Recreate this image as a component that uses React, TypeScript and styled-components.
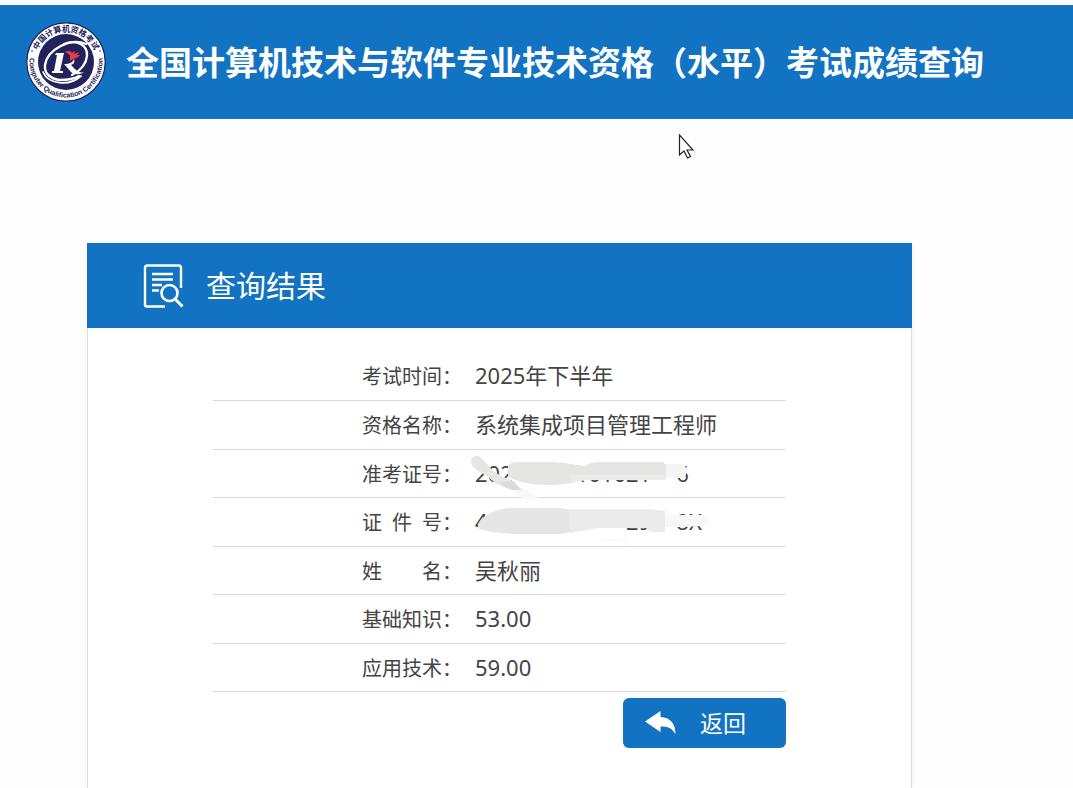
import React from "react";
import styled, { createGlobalStyle } from "styled-components";

const BLUE = "#1173c2";
const NAVY = "#23235b";

const GlobalStyle = createGlobalStyle`
  * { box-sizing: border-box; }
  body {
    margin: 0;
    background: #fefefe;
    color: #444;
    font-family: "Noto Sans", "Noto Sans CJK SC", sans-serif;
  }
`;

const Page = styled.div`
  display: flex;
  flex-direction: column;
  min-height: 100vh;
  padding-top: 5px;
`;

const Header = styled.header`
  display: flex;
  align-items: center;
  gap: 20px;
  height: 114px;
  padding-left: 26px;
  background: ${BLUE};
`;

const SiteTitle = styled.h1`
  margin: 0;
  padding-bottom: 2px;
  color: #fff;
  font-family: "Noto Sans CJK SC", sans-serif;
  font-size: 33px;
  font-weight: 700;
  line-height: 48px;
  white-space: nowrap;
`;

const Main = styled.main`
  display: flex;
  flex: 1;
  flex-direction: column;
  padding: 124px 161px 0 87px;
`;

const Panel = styled.section`
  display: flex;
  flex: 1;
  flex-direction: column;
  box-shadow: 0 0 6px rgba(0, 0, 0, 0.06);
`;

const PanelHeader = styled.div`
  display: flex;
  align-items: center;
  gap: 22px;
  height: 85px;
  padding-left: 56px;
  background: ${BLUE};
`;

const PanelTitle = styled.h2`
  margin: 0;
  color: #fff;
  font-size: 30px;
  font-weight: 400;
  line-height: 44px;
`;

const PanelBody = styled.div`
  display: flex;
  flex: 1;
  flex-direction: column;
  padding: 24px 125px 40px;
  border: solid #ddd;
  border-width: 0 1px;
  background: #fff;
`;

const ResultTable = styled.table`
  width: 100%;
  border-spacing: 0;
  table-layout: fixed;
`;

const Row = styled.tr`
  height: 49px;
  &:nth-child(odd):not(:first-child) { height: 48px; }
`;

const LabelCell = styled.th`
  width: 262px;
  padding: 0 13px 0 0;
  border-bottom: 1px solid #d9d9d9;
  color: #444;
  font-family: "Noto Sans CJK SC", sans-serif;
  font-size: 20px;
  font-weight: 400;
  line-height: 28px;
`;

const Label = styled.span`
  display: flex;
  justify-content: flex-end;
`;

const LabelText = styled.span`
  width: 80px;
  text-align-last: justify;
`;

const ValueCell = styled.td`
  padding: 0 0 2px;
  border-bottom: 1px solid #d9d9d9;
  font-size: 22px;
  line-height: 32px;
  white-space: pre;
`;

const Masked = styled.span`
  position: relative;
  display: block;
`;

const Mask = styled.svg`
  position: absolute;
  top: -7px;
  left: -15px;
  overflow: visible;
`;

const BackButton = styled.button`
  display: flex;
  align-items: center;
  align-self: flex-end;
  gap: 24px;
  width: 163px;
  height: 50px;
  margin-top: 6px;
  padding: 0 0 2px 22px;
  border: 0;
  border-radius: 6px;
  background: ${BLUE};
  color: #fff;
  font-family: "Noto Sans CJK SC", sans-serif;
  font-size: 23px;
  line-height: 32px;
`;

const Pointer = styled.svg`
  position: absolute;
  top: 134px;
  left: 678px;
`;

const Logo = () => (
  <svg width="80" height="80" viewBox="0 0 80 80" aria-hidden="true">
    <defs>
      <path id="ringTop" d="M9.500 40a30.500 30.500 0 0 1 61 0" />
      <path id="ringBottom" d="M4.500 30a36.600 36.600 0 1 0 71 0" />
    </defs>
    <circle cx="40" cy="40" r="39.2" fill="#fff" stroke={NAVY} strokeWidth="1.2" />
    <circle cx="40" cy="40" r="28" fill={NAVY} />
    <g fill={NAVY} fontWeight="700" textAnchor="middle">
      <text fontSize="8" fontFamily="Noto Sans CJK SC, sans-serif">
        <textPath href="#ringTop" startOffset="50%">中国计算机资格考试</textPath>
      </text>
      <text fontSize="7" fontFamily="Liberation Sans, sans-serif">
        <textPath href="#ringBottom" startOffset="50%">Computer Qualification Certification</textPath>
      </text>
    </g>
    <circle cx="6" cy="29" r=".8" fill={NAVY} />
    <circle cx="74" cy="29" r=".8" fill={NAVY} />
    <g fill="none" stroke="#fff" strokeLinecap="round">
      <path d="M60 22C44 15 21 28 19 43c-1 9 6 14 15 15 8 0 14-1 19-4" strokeWidth="2.400" />
      <path d="M38 22c13-5 24 1 23 12-1 9-7 15-15 19" strokeWidth="2.400" />
      <path d="M17 50c5 12 26 15 38 4" strokeWidth="1.800" />
    </g>
    <path d="M30 31h8l-4 18h3v2H26v-2h2l3-16h-2z" fill="#fff" />
    <path d="M38 42c6 0 9-2 10-5 1 3 0 5-3 6l5 5c2 2 5 3 8 2-4 3-10 3-13 0l-6-7z" fill="#fff" />
    <path d="M39 30c4-2 6-1 7 1l-1 4c-1-2-3-4-6-5zM44 36c0-4 3-6 5-7l-1 3 5-2-2 3h3c-3 4-6 3-10 6z" fill="#ed3a45" />
  </svg>
);

const SearchDocumentIcon = () => (
  <svg width="41" height="44" viewBox="0 0 41 44" fill="none" stroke="#fff" aria-hidden="true">
    <path d="M38 24V3.500a2 2 0 0 0-2-2H4a2 2 0 0 0-2 2v37a2 2 0 0 0 2 2h18" strokeWidth="2.400" />
    <path d="M9 10h21M9 15.500h21M9 21h10M9 26.500h7" strokeWidth="2.400" />
    <circle cx="26.500" cy="29" r="8" strokeWidth="2.600" />
    <path d="M32 35l7.500 7.500" strokeWidth="3" />
  </svg>
);

const ReplyIcon = () => (
  <svg width="31" height="25" viewBox="0 0 31 25" aria-hidden="true">
    <path d="M0 11.500L15.500 1v6C25 7.500 30.500 13 30.500 24.500 27 18 23 16.500 15.500 16.500V22z" fill="#fff" />
  </svg>
);

const TicketMask = () => (
  <Mask width="260" height="48" viewBox="460 450 260 48" aria-hidden="true">
    <path d="M660 464h20c9 0 9 14 0 14h-20z" fill="#f5f5f5" />
    <path d="M508 470c-1-5 3-8 9-8h34c14 0 24 3 34 4 4-3 8-4 14-4h64l3 3v14l-2 1h-75c-12 0-20 5-36 5-25 0-33-3-45-8z" fill="#e5e5e4" />
    <path d="M571 475h94v5h-76c-8 0-12 2-18 3z" fill="#eaeaea" />
    <path d="M472 465c-3-6 1-10 6-9 3 1 5 3 8 7 7 8 13 13 23 16l7 4-4 7c-11-3-17-7-24-13-7-5-13-7-16-12z" fill="#e6e6e5" />
    <path d="M500 482l13-1 9 9h-10c-5-2-9-4-12-8z" fill="#dbdbda" />
    <path d="M512 490h14l14 9h-16z" fill="#f8f8f8" />
  </Mask>
);

const IdMask = () => (
  <Mask width="260" height="48" viewBox="460 498 260 48" aria-hidden="true">
    <path d="M660 515h40c12 0 12 11 0 11l-16 1h-24z" fill="#f8f8f8" />
    <path d="M478 525c2-8 16-16 32-17h51l10 2v22l-11 2h-38c-15 0-27-1-39-4-5 0-5-3-5-5z" fill="#e6e6e6" />
    <path d="M570 509h76l19 2v21h-15l-4-4h-48l-28 5z" fill="#ebebeb" />
    <path d="M596 540l34-1c-8 3-26 3-34 1z" fill="#f8f8f8" />
  </Mask>
);

// U+2007 is as wide as a digit, so blanked-out digits keep their room.
const blank = (count: number) => "\u2007".repeat(count);

const results: { label: string; value: string; mask?: React.ReactNode }[] = [
  { label: "考试时间", value: "2025年下半年" },
  { label: "资格名称", value: "系统集成项目管理工程师" },
  { label: "准考证号", value: `202${blank(5)}101021${blank(2)}6`, mask: <TicketMask /> },
  { label: "证 件 号", value: `4${blank(11)}29${blank(2)}8X`, mask: <IdMask /> },
  { label: "姓 名", value: "吴秋丽" },
  { label: "基础知识", value: "53.00" },
  { label: "应用技术", value: "59.00" },
];

export default function App() {
  return (
    <Page>
      <GlobalStyle />
      <Header>
        <Logo />
        <SiteTitle>全国计算机技术与软件专业技术资格（水平）考试成绩查询</SiteTitle>
      </Header>
      <Main>
        <Panel>
          <PanelHeader>
            <SearchDocumentIcon />
            <PanelTitle>查询结果</PanelTitle>
          </PanelHeader>
          <PanelBody>
            <ResultTable>
              <tbody>
                {results.map(({ label, value, mask }) => (
                  <Row key={label}>
                    <LabelCell scope="row">
                      <Label>
                        <LabelText>{label}</LabelText>：
                      </Label>
                    </LabelCell>
                    <ValueCell>
                      {mask ? <Masked>{value}{mask}</Masked> : value}
                    </ValueCell>
                  </Row>
                ))}
              </tbody>
            </ResultTable>
            <BackButton type="button">
              <ReplyIcon />
              返回
            </BackButton>
          </PanelBody>
        </Panel>
      </Main>
      <Pointer width="16" height="26" viewBox="0 0 16 26" aria-hidden="true">
        <path d="M1.500 1v20l4.500-4 3.500 7 3-1.500-3.500-6.500h6z" fill="#fff" stroke="#222" strokeWidth="1.200" />
      </Pointer>
    </Page>
  );
}
